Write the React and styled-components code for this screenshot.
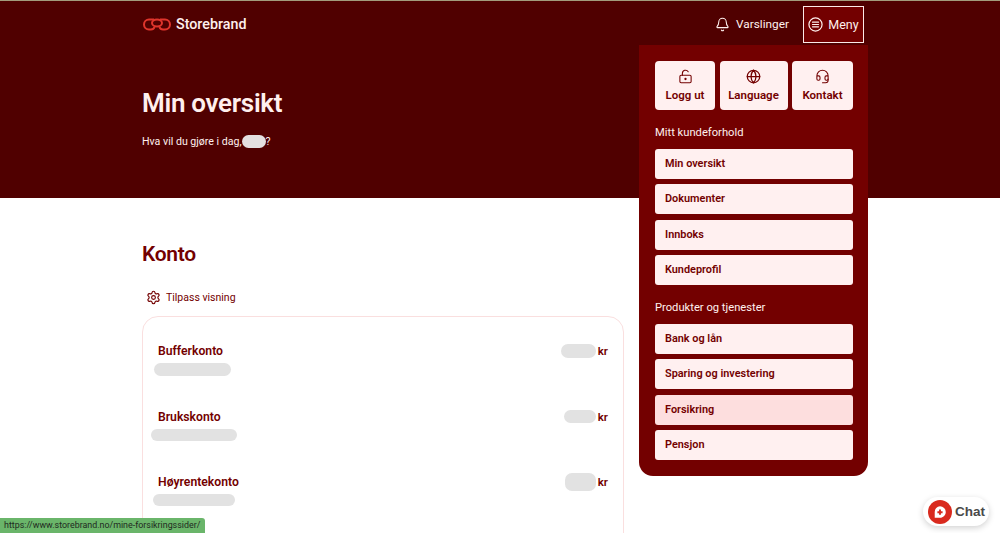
import styled, { createGlobalStyle } from 'styled-components';
import { Bell, Globe, Headset, LockKeyholeOpen, Settings } from 'lucide-react';

const GlobalStyle = createGlobalStyle`
  html, body {
    margin: 0;
    height: 100%;
    overflow: hidden;
    background: #fff;
    font-family: 'Roboto', 'Liberation Sans', sans-serif;
  }
`;

const Page = styled.div`
  position: relative;
  width: 1000px;
  height: 533px;
  overflow: hidden;
`;

const Hero = styled.header`
  height: 197px;
  background: #500000;
  border-top: 1px solid #a39c7c;
  color: #fff0ee;
`;

const TopBar = styled.div`
  height: 46px;
  display: flex;
  align-items: center;
  padding: 0 136px 0 142px;
`;

const Brand = styled.div`
  display: flex;
  align-items: center;
  gap: 4px;
  font-size: 14.3px;
  font-weight: 500;
  flex: 1;
`;

const Varsler = styled.div`
  display: flex;
  align-items: center;
  gap: 6px;
  font-size: 11.8px;
  margin-right: 14px;
`;

const MenuWrap = styled.div`
  position: relative;
`;

const MenuButton = styled.div`
  box-sizing: border-box;
  width: 61px;
  height: 37px;
  display: flex;
  align-items: center;
  justify-content: center;
  gap: 5px;
  font-size: 12.5px;
  background: #730000;
  border: 1.5px solid #fbe9e7;
`;

const Panel = styled.nav`
  position: absolute;
  top: 39px;
  right: -4px;
  box-sizing: border-box;
  width: 229px;
  height: 431px;
  padding: 16px 15px 0 16px;
  background: #730000;
  border-radius: 0 0 14px 14px;
  z-index: 2;
`;

const QuickRow = styled.div`
  display: flex;
  justify-content: space-between;
`;

const QuickButton = styled.div`
  box-sizing: border-box;
  width: ${p => p.$w}px;
  height: 49px;
  padding-top: 8px;
  display: flex;
  flex-direction: column;
  align-items: center;
  gap: 4px;
  background: #fff0f0;
  border-radius: 4px;
  color: #730000;
  font-size: 11.5px;
  font-weight: 600;
`;

const SectionLabel = styled.div`
  height: 14px;
  line-height: 14px;
  margin: ${p => p.$top}px 0 9px;
  font-size: 11.2px;
  color: #fff0ee;
`;

const MenuItem = styled.div`
  box-sizing: border-box;
  height: 30px;
  margin-bottom: 5.5px;
  padding: 0 0 1px 10px;
  display: flex;
  align-items: center;
  border-radius: 3px;
  background: ${p => (p.$active ? '#fddede' : '#fff0f0')};
  color: #730000;
  font-size: 10.9px;
  font-weight: 600;
`;

const HeroBody = styled.div`
  padding: 41px 0 0 142px;
`;

const Title = styled.h1`
  margin: 0;
  height: 30px;
  line-height: 30px;
  font-size: 26px;
  font-weight: 600;
  letter-spacing: -0.3px;
`;

const Lead = styled.p`
  margin: 15px 0 0;
  display: flex;
  align-items: center;
  height: 16px;
  font-size: 10.6px;
`;

const Blob = styled.span`
  display: block;
  flex: none;
  width: ${p => p.$w}px;
  height: ${p => p.$h}px;
  margin-left: ${p => p.$left || 0}px;
  border-radius: 7px;
  background: ${p => p.$color || '#e2e2e2'};
`;

const Main = styled.main`
  padding: 44px 0 0 142px;
  width: 482px;
`;

const Heading = styled.h2`
  margin: 0;
  height: 24px;
  line-height: 24px;
  font-size: 21px;
  font-weight: 600;
  letter-spacing: -0.3px;
  color: #730000;
`;

const Customize = styled.div`
  margin: 23px 0 0 4px;
  height: 16px;
  display: flex;
  align-items: center;
  gap: 5px;
  font-size: 10.5px;
  color: #730000;
`;

const Card = styled.section`
  box-sizing: border-box;
  margin-top: 11px;
  height: 260px;
  padding: 26px 15px 0 15px;
  border: 1px solid #fadfdf;
  border-radius: 16px;
`;

const Row = styled.div`
  display: flex;
  justify-content: space-between;
  height: 65.5px;
`;

const RowLeft = styled.div`
  display: flex;
  flex-direction: column;
  gap: 4px;
`;

const RowName = styled.div`
  height: 16px;
  line-height: 16px;
  font-size: 12.2px;
  font-weight: 600;
  color: #730000;
`;

const Amount = styled.div`
  display: flex;
  align-items: center;
  gap: 2px;
  height: 16px;
  font-size: 11.5px;
  font-weight: 600;
  color: #730000;
`;

const StatusBar = styled.div`
  position: absolute;
  left: 0;
  bottom: 0;
  width: 205px;
  height: 15px;
  line-height: 15px;
  padding-left: 4px;
  box-sizing: border-box;
  background: #6ab56a;
  border-radius: 0 3px 0 0;
  font-size: 8.9px;
  color: #1f2a1f;
  white-space: nowrap;
`;

const ChatBubble = styled.div`
  position: absolute;
  right: 11px;
  bottom: 7px;
  box-sizing: border-box;
  width: 66px;
  height: 29px;
  display: flex;
  align-items: center;
  gap: 3px;
  padding-left: 5px;
  background: #fff;
  border-radius: 15px;
  box-shadow: 0 2px 6px rgba(0, 0, 0, 0.18);
  font-family: 'Liberation Sans', sans-serif;
  font-size: 13.5px;
  font-weight: 700;
  color: #4a4a4a;
`;

const Logo = () => (
  <svg width="30" height="15" viewBox="0 0 30 15" fill="none" stroke="#e0352c" strokeWidth="2">
    <path d="M12 2.500 H7 a5 5 0 0 0 0 10 H9 c2 0 3-1 3.500-2.500" />
    <path d="M18 2.500 H23 a5 5 0 0 1 0 10 H21 c-2 0-3-1-3.500-2.500" />
    <ellipse cx="15" cy="6" rx="5" ry="3.500" />
  </svg>
);

const MenuIcon = () => (
  <svg width="15" height="15" viewBox="0 0 16 16" fill="none" stroke="#fff0ee" strokeWidth="1.300" strokeLinecap="round">
    <circle cx="8" cy="8" r="7" />
    <path d="M4.800 5.500h6.400M4.800 8h6.400M4.800 10.500h6.400" />
  </svg>
);

const ChatIcon = () => (
  <svg width="24" height="24" viewBox="0 0 25 25">
    <circle cx="12.500" cy="12.500" r="12.500" fill="#d92a1e" />
    <path d="M12.500 6.500a6 6 0 0 1 6 6c0 3.300-2.700 6-6 6H7v-6a6 6 0 0 1 5.500-6z" fill="#fff" />
    <path d="M11.500 10h2v1.700h1.700v2h-1.700v1.700h-2v-1.700H9.800v-2h1.700z" fill="#d92a1e" />
  </svg>
);

const customerItems = ['Min oversikt', 'Dokumenter', 'Innboks', 'Kundeprofil'];
const productItems = ['Bank og lån', 'Sparing og investering', 'Forsikring', 'Pensjon'];

const accounts = [
  { name: 'Bufferkonto', subW: 77, subLeft: -4, subH: 13, amountW: 35, amountH: 14 },
  { name: 'Brukskonto', subW: 86, subLeft: -7, subH: 12, amountW: 32, amountH: 13 },
  { name: 'Høyrentekonto', subW: 82, subLeft: -5, subH: 12, amountW: 31, amountH: 18 },
];

const App = () => (
  <Page>
    <GlobalStyle />
    <Hero>
      <TopBar>
        <Brand>
          <Logo />
          Storebrand
        </Brand>
        <Varsler>
          <Bell size={15} strokeWidth={1.7} />
          Varslinger
        </Varsler>
        <MenuWrap>
          <MenuButton>
            <MenuIcon />
            Meny
          </MenuButton>
          <Panel>
            <QuickRow>
              <QuickButton $w={60}>
                <LockKeyholeOpen size={15} strokeWidth={1.7} />
                Logg ut
              </QuickButton>
              <QuickButton $w={68}>
                <Globe size={15} strokeWidth={2} />
                Language
              </QuickButton>
              <QuickButton $w={61}>
                <Headset size={15} strokeWidth={1.7} />
                Kontakt
              </QuickButton>
            </QuickRow>
            <SectionLabel $top={16}>Mitt kundeforhold</SectionLabel>
            {customerItems.map(item => (
              <MenuItem key={item}>{item}</MenuItem>
            ))}
            <SectionLabel $top={15.5}>Produkter og tjenester</SectionLabel>
            {productItems.map(item => (
              <MenuItem key={item} $active={item === 'Forsikring'}>
                {item}
              </MenuItem>
            ))}
          </Panel>
        </MenuWrap>
      </TopBar>
      <HeroBody>
        <Title>Min oversikt</Title>
        <Lead>
          Hva vil du gjøre i dag,
          <Blob $w={24} $h={13} $color="#e4e0e0" />?
        </Lead>
      </HeroBody>
    </Hero>
    <Main>
      <Heading>Konto</Heading>
      <Customize>
        <Settings size={15} strokeWidth={1.8} />
        Tilpass visning
      </Customize>
      <Card>
        {accounts.map(a => (
          <Row key={a.name}>
            <RowLeft>
              <RowName>{a.name}</RowName>
              <Blob $w={a.subW} $h={a.subH} $left={a.subLeft} />
            </RowLeft>
            <Amount>
              <Blob $w={a.amountW} $h={a.amountH} />
              kr
            </Amount>
          </Row>
        ))}
      </Card>
    </Main>
    <StatusBar>https://www.storebrand.no/mine-forsikringssider/</StatusBar>
    <ChatBubble>
      <ChatIcon />
      Chat
    </ChatBubble>
  </Page>
);

export default App;
